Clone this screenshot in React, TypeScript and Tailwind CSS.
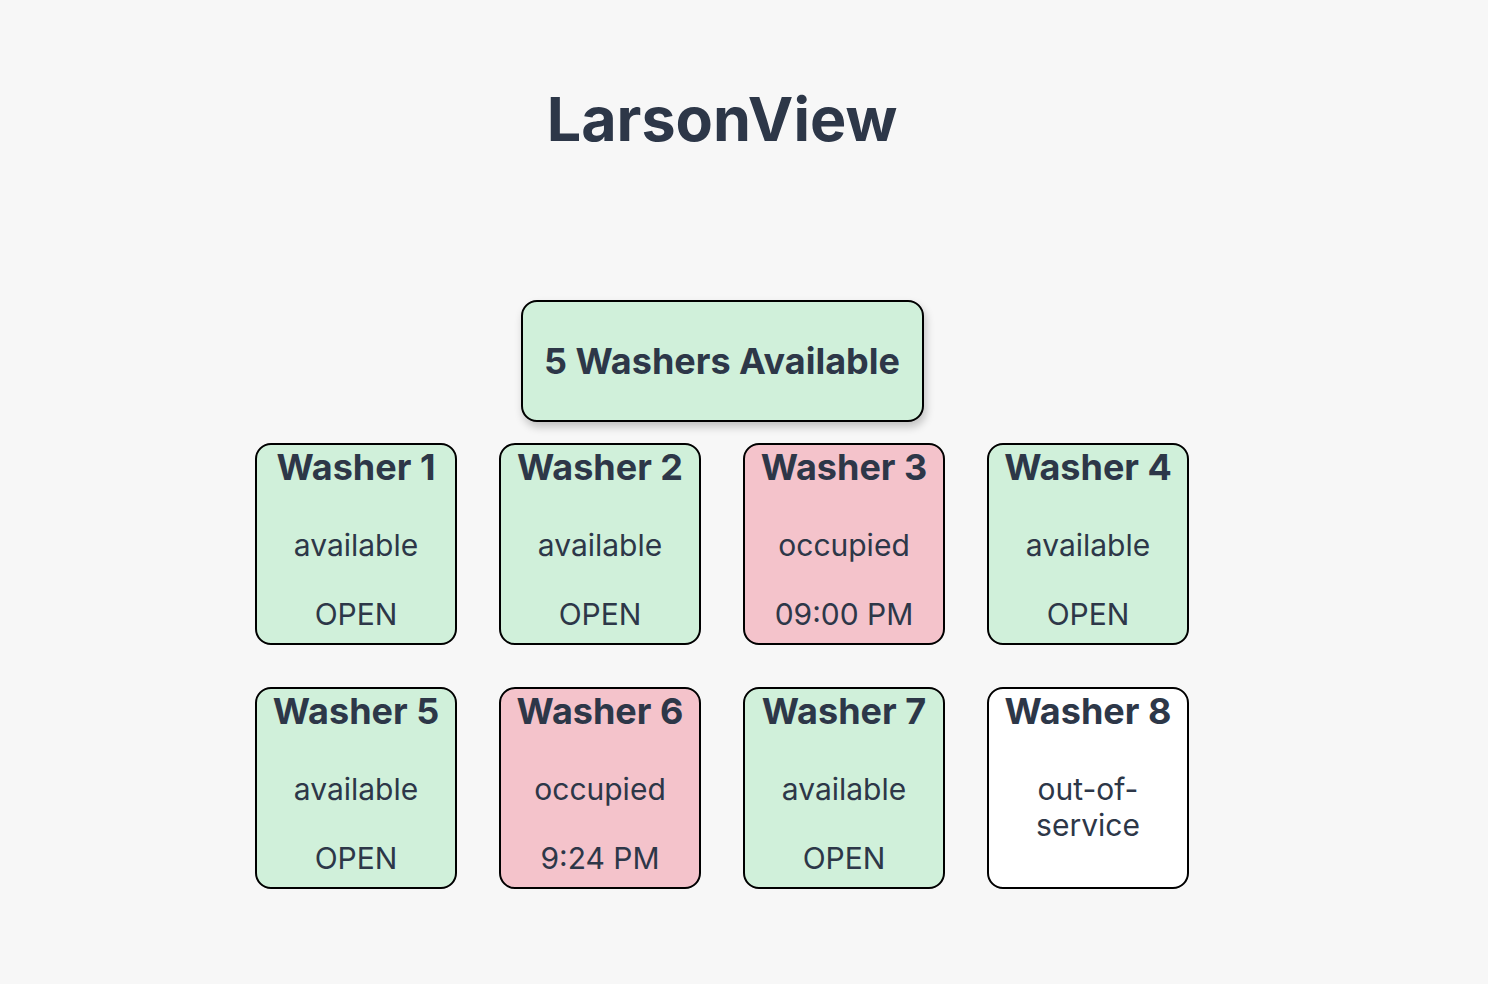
const washers = [
  { id: 1, status: 'available', time: 'OPEN' },
  { id: 2, status: 'available', time: 'OPEN' },
  { id: 3, status: 'occupied', time: '09:00 PM' },
  { id: 4, status: 'available', time: 'OPEN' },
  { id: 5, status: 'available', time: 'OPEN' },
  { id: 6, status: 'occupied', time: '9:24 PM' },
  { id: 7, status: 'available', time: 'OPEN' },
  { id: 8, status: 'out-of-service', time: '' },
];

const bgFor = (status: string) =>
  status === 'available' ? 'bg-[#d0f0da]' : status === 'occupied' ? 'bg-[#f4c3cb]' : 'bg-white';

function WasherCard({ id, status, time }: { id: number; status: string; time: string }) {
  return (
    <div
      className={`w-[202px] h-[202px] border-2 border-black rounded-2xl flex flex-col items-center text-center ${bgFor(status)}`}
    >
      <h2 className="text-[36px] font-bold leading-[44px]">Washer {id}</h2>
      <p className="mt-[38px] text-[30px] leading-[36px] px-2">{status}</p>
      {time && <p className="mt-[33px] text-[30px] leading-[36px]">{time}</p>}
    </div>
  );
}

export default function App() {
  const available = washers.filter(w => w.status === 'available').length;

  return (
    <div className="min-h-screen bg-[#f7f7f7] text-[#2d3748] font-['Inter',sans-serif]">
      <main className="w-[1444px] flex flex-col items-center">
        <h1 className="mt-[89px] text-[61px] font-bold leading-[61px]">LarsonView</h1>

        <div className="mt-[150px] w-[403px] h-[122px] flex items-center justify-center border-2 border-black rounded-2xl bg-[#d0f0da] shadow-[2px_5px_8px_rgba(0,0,0,0.22)]">
          <h2 className="text-[36px] font-bold leading-[44px]">{available} Washers Available</h2>
        </div>

        <div className="mt-[21px] grid grid-cols-4 gap-[42px]">
          {washers.map(w => (
            <WasherCard key={w.id} {...w} />
          ))}
        </div>
      </main>
    </div>
  );
}
